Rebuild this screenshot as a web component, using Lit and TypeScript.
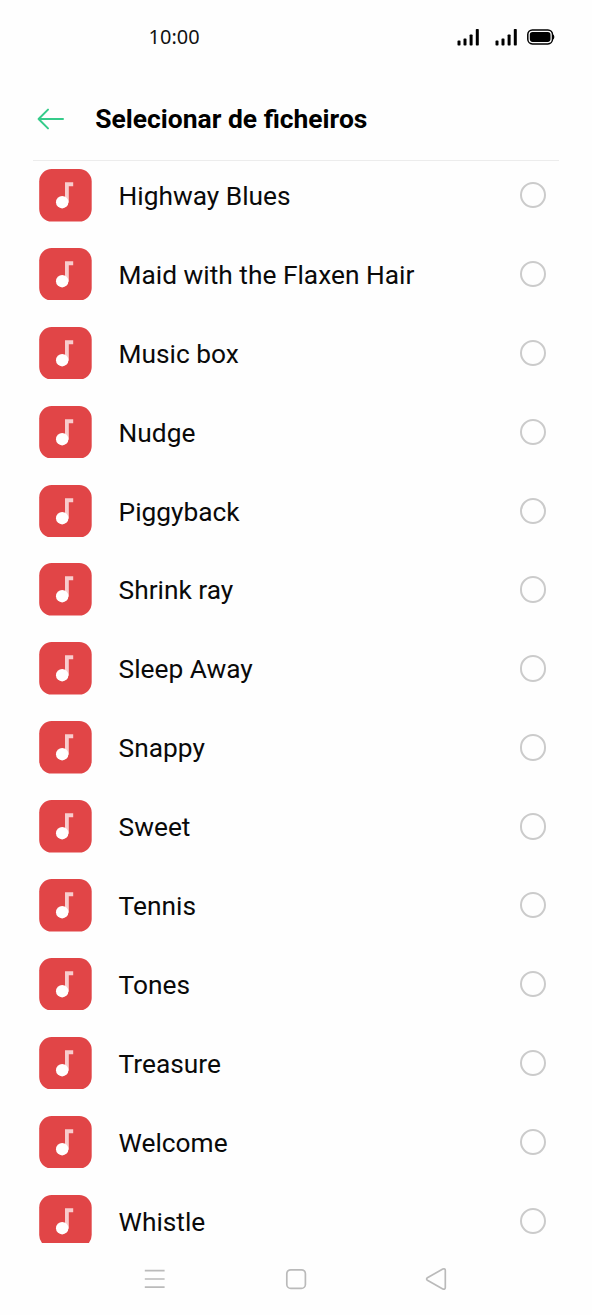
import { LitElement, html, css, svg } from "lit";
import { customElement } from "lit/decorators.js";

const TRACKS = [
  "Highway Blues",
  "Maid with the Flaxen Hair",
  "Music box",
  "Nudge",
  "Piggyback",
  "Shrink ray",
  "Sleep Away",
  "Snappy",
  "Sweet",
  "Tennis",
  "Tones",
  "Treasure",
  "Welcome",
  "Whistle",
];

const signalBars = svg`
  <rect x="0.5" y="11.6" width="3" height="4.9" rx="0.8"/>
  <rect x="6.5" y="9.6" width="3" height="6.9" rx="0.8"/>
  <rect x="12.6" y="5.4" width="3" height="11.1" rx="0.8"/>
  <rect x="18.8" y="0" width="3" height="16.5" rx="0.8"/>`;

@customElement("status-bar")
class StatusBar extends LitElement {
  static styles = css`
    :host {
      display: flex;
      height: 74px;
      box-sizing: border-box;
      align-items: center;
      padding: 0 37px 0 148.6px;
      font: 19.95px/24px "Noto Sans", sans-serif;
      color: #111;
    }
    .time { flex: 1; }
    .icon { display: block; }
    .signal { margin-right: 16px; }
    .signal.last { margin-right: 10px; }
  `;
  render() {
    return html`
      <span class="time">10:00</span>
      <svg class="icon signal" width="22" height="17" viewBox="0 0 22 17">${signalBars}</svg>
      <svg class="icon signal last" width="22" height="17" viewBox="0 0 22 17">${signalBars}</svg>
      <svg class="icon" width="28" height="16" viewBox="0 0 28 16">
        <rect x="0.8" y="0.9" width="24.7" height="14" rx="4.6" fill="none" stroke="#000" stroke-width="1.5"/>
        <rect x="2.8" y="2.9" width="20.7" height="10" rx="2.8" fill="#000"/>
        <path d="M25.5 5 Q27.4 5.8 27.4 8 T25.5 11Z" fill="#000"/>
      </svg>`;
  }
}

@customElement("track-row")
class TrackRow extends LitElement {
  static properties = { name: { type: String } };
  declare name: string;
  static styles = css`
    :host {
      display: flex;
      flex: none;
      align-items: center;
      height: 52.6px;
      padding: 0 45.6px 0 39.4px;
      font: 26.3px/32px Roboto, sans-serif;
      color: #0a0a0a;
    }
    .art { display: block; margin-right: 26.4px; }
    .name { flex: 1; padding-top: 1.6px; }
    .radio {
      box-sizing: border-box;
      width: 26.4px;
      height: 26.4px;
      border: 2px solid #cbcbcb;
      border-radius: 50%;
    }
  `;
  render() {
    return html`
      <svg class="art" width="52.8" height="52.6" viewBox="0 0 52.8 52.6">
        <rect x="0.2" width="52.5" height="52.6" rx="12.5" fill="#e14547"/>
        <path d="M26 13.3H34.2V17.2H29.8V33.5H26Z" fill="#f8cccd"/>
        <circle cx="23.2" cy="33.2" r="6.2" fill="#fff"/>
      </svg>
      <span class="name">${this.name}</span>
      <span class="radio"></span>`;
  }
}

@customElement("app-root")
class AppRoot extends LitElement {
  static styles = css`
    :host {
      display: flex;
      flex-direction: column;
      height: 1315px;
      background: #fefefe;
      overflow: hidden;
    }
    .header {
      display: flex;
      align-items: center;
      height: 87px;
      box-sizing: border-box;
      margin: 0 33px;
      padding: 3px 0 0 4px;
      border-bottom: 1px solid #ececec;
    }
    .back { display: block; margin-right: 30.3px; }
    .title {
      margin: 0;
      font: 700 26.43px/32px Roboto, sans-serif;
      color: #000;
    }
    .list {
      display: flex;
      flex-direction: column;
      gap: 26.3px;
      height: 1082px;
      box-sizing: border-box;
      padding-top: 7.95px;
      overflow: hidden;
    }
    .nav {
      flex: 1;
      display: flex;
      justify-content: space-between;
      align-items: center;
      padding: 0 145px 0 144px;
    }
    .glyph { display: block; fill: none; stroke: #bababa; stroke-width: 1.7; stroke-linejoin: round; }
  `;
  render() {
    return html`
      <status-bar></status-bar>
      <header class="header">
        <svg class="back" width="28" height="22" viewBox="0 0 28 22" fill="none" stroke="#35cb8a" stroke-width="2" stroke-linecap="round" stroke-linejoin="round">
          <path d="M26 11H1.6M11 1.6L1.6 11L11 20.4"/>
        </svg>
        <h1 class="title">Selecionar de ficheiros</h1>
      </header>
      <main class="list">
        ${TRACKS.map((t) => html`<track-row .name=${t}></track-row>`)}
      </main>
      <nav class="nav">
        <svg class="glyph" width="22" height="22" viewBox="0 0 22 22"><path d="M0.8 2.7H20.6M0.8 11H20.6M0.8 19.2H20.6"/></svg>
        <svg class="glyph" width="22" height="22" viewBox="0 0 22 22"><rect x="1.8" y="1.8" width="18.6" height="18.6" rx="4"/></svg>
        <svg class="glyph" width="22" height="24" viewBox="0 0 22 24"><path d="M2.4 10.8L17.8 2Q20.3 1.2 20.3 3.4V20.6Q20.3 22.8 17.8 22L2.4 13.2Q0.8 12 2.4 10.8Z"/></svg>
      </nav>`;
  }
}
